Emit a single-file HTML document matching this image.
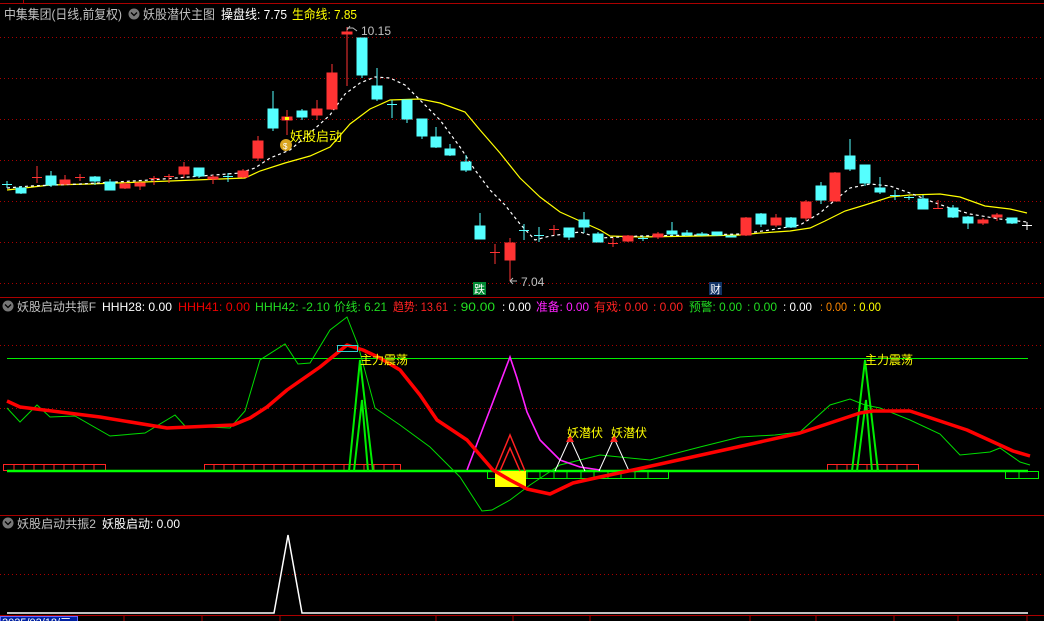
<!DOCTYPE html>
<html><head><meta charset="utf-8"><style>
html,body{margin:0;padding:0;background:#000;}
svg{display:block;font-family:"Liberation Sans","Noto Sans CJK SC",sans-serif;}
</style></head><body>
<svg width="1044" height="621" viewBox="0 0 1044 621" xmlns="http://www.w3.org/2000/svg">
<rect width="1044" height="621" fill="#000"/>
<line x1="0" y1="3.5" x2="1044" y2="3.5" stroke="#a00" stroke-width="1"/>
<line x1="23.5" y1="0" x2="23.5" y2="4" stroke="#a00"/>
<line x1="0" y1="297.5" x2="1044" y2="297.5" stroke="#a00"/>
<line x1="0" y1="515.5" x2="1044" y2="515.5" stroke="#a00"/>
<line x1="0" y1="615.5" x2="1044" y2="615.5" stroke="#a00"/>
<g stroke="#a00" stroke-dasharray="1,3" stroke-width="1">
<line x1="0" y1="37.5" x2="1044" y2="37.5"/><line x1="0" y1="78.5" x2="1044" y2="78.5"/>
<line x1="0" y1="119.5" x2="1044" y2="119.5"/><line x1="0" y1="160.5" x2="1044" y2="160.5"/>
<line x1="0" y1="201.5" x2="1044" y2="201.5"/><line x1="0" y1="242.5" x2="1044" y2="242.5"/>
<line x1="0" y1="283.5" x2="1044" y2="283.5"/>
<line x1="0" y1="345.5" x2="1044" y2="345.5"/><line x1="0" y1="408.5" x2="1044" y2="408.5"/>
<line x1="0" y1="574.5" x2="1044" y2="574.5"/>
</g>
<g font-size="13">
<text x="4" y="19" fill="#c0c0c0" textLength="118" lengthAdjust="spacingAndGlyphs">中集集团(日线,前复权)</text>
<text x="143" y="19" fill="#c0c0c0" textLength="72" lengthAdjust="spacingAndGlyphs">妖股潜伏主图</text>
<text x="221" y="19" fill="#fff" textLength="66" lengthAdjust="spacingAndGlyphs">操盘线: 7.75</text>
<text x="292" y="19" fill="#ff0" textLength="65" lengthAdjust="spacingAndGlyphs">生命线: 7.85</text>
</g>
<circle cx="134" cy="14" r="5.5" fill="#777"/><path d="M131,12.5 L134,15.5 L137,12.5" stroke="#000" stroke-width="1.3" fill="none"/>
<polyline fill="none" stroke="#ff0" stroke-width="1.2" points="7,190 50,185 90,184 170,181 245,178 260,171 285,163 310,156 330,147 350,124 370,109 390,100 420,99 440,103 465,112 480,130 500,153 520,178 540,197 560,212 580,221 600,230 610,236 640,237 700,236 740,235 760,233 790,231 810,228 825,221 845,211 865,205 890,197 910,195 940,194 960,197 985,206 1010,209 1027,213"/>
<polyline fill="none" stroke="#fff" stroke-width="1.2" stroke-dasharray="3,3" points="7,188 30,186 80,184 150,180 240,173 255,168 270,158 290,150 310,133 330,115 345,94 360,83 375,77 390,78 405,85 420,100 440,120 460,147 475,170 490,190 505,205 520,224 535,240 550,236 580,232 600,238 640,236 700,235 740,234 770,230 800,225 820,213 835,200 850,188 870,184 890,186 910,193 930,201 950,208 970,214 1000,219 1027,222"/>
<g stroke="#5ff" fill="#5ff" stroke-width="1">
<line x1="7" y1="181" x2="7" y2="188"/><line x1="2" y1="184.5" x2="12" y2="184.5"/>
<line x1="21" y1="186" x2="21" y2="194"/><rect x="16" y="188" width="10" height="5"/>
<line x1="51" y1="171" x2="51" y2="187"/><rect x="46" y="176" width="10" height="9"/>
<line x1="95" y1="176" x2="95" y2="185"/><rect x="90" y="177" width="10" height="4"/>
<line x1="110" y1="179" x2="110" y2="190"/><rect x="105" y="182" width="10" height="8"/>
<line x1="199" y1="168" x2="199" y2="178"/><rect x="194" y="168" width="10" height="8"/>
<line x1="228" y1="173" x2="228" y2="182"/><line x1="223" y1="176.5" x2="233" y2="176.5"/>
<line x1="273" y1="91" x2="273" y2="131"/><rect x="268" y="109" width="10" height="19"/>
<line x1="302" y1="109" x2="302" y2="120"/><rect x="297" y="111" width="10" height="6"/>
<line x1="362" y1="38" x2="362" y2="78"/><rect x="357" y="38" width="10" height="37"/>
<line x1="377" y1="68" x2="377" y2="101"/><rect x="372" y="86" width="10" height="13"/>
<line x1="392" y1="100" x2="392" y2="118"/><line x1="387" y1="104.5" x2="397" y2="104.5"/>
<line x1="407" y1="100" x2="407" y2="123"/><rect x="402" y="100" width="10" height="19"/>
<line x1="422" y1="119" x2="422" y2="139"/><rect x="417" y="119" width="10" height="17"/>
<line x1="436" y1="127" x2="436" y2="148"/><rect x="431" y="137" width="10" height="10"/>
<line x1="450" y1="144" x2="450" y2="156"/><rect x="445" y="149" width="10" height="6"/>
<line x1="466" y1="155" x2="466" y2="172"/><rect x="461" y="162" width="10" height="8"/>
<line x1="480" y1="213" x2="480" y2="239"/><rect x="475" y="226" width="10" height="13"/>
<line x1="524" y1="224" x2="524" y2="240"/><line x1="519" y1="230.5" x2="529" y2="230.5"/>
<line x1="539" y1="227" x2="539" y2="242"/><line x1="534" y1="235.5" x2="544" y2="235.5"/>
<line x1="569" y1="228" x2="569" y2="240"/><rect x="564" y="228" width="10" height="9"/>
<line x1="584" y1="212" x2="584" y2="233"/><rect x="579" y="220" width="10" height="7"/>
<line x1="598" y1="232" x2="598" y2="242"/><rect x="593" y="234" width="10" height="8"/>
<line x1="643" y1="236" x2="643" y2="241"/><line x1="638" y1="238.5" x2="648" y2="238.5"/>
<line x1="672" y1="222" x2="672" y2="236"/><rect x="667" y="231" width="10" height="3"/>
<line x1="687" y1="230" x2="687" y2="236"/><rect x="682" y="233" width="10" height="2"/>
<line x1="702" y1="232" x2="702" y2="236"/><rect x="697" y="234" width="10" height="1"/>
<line x1="717" y1="232" x2="717" y2="236"/><rect x="712" y="232" width="10" height="3"/>
<rect x="726" y="236" width="10" height="1"/>
<line x1="761" y1="213" x2="761" y2="227"/><rect x="756" y="214" width="10" height="10"/>
<line x1="791" y1="217" x2="791" y2="228"/><rect x="786" y="218" width="10" height="9"/>
<line x1="821" y1="182" x2="821" y2="204"/><rect x="816" y="186" width="10" height="14"/>
<line x1="850" y1="139" x2="850" y2="171"/><rect x="845" y="156" width="10" height="13"/>
<line x1="865" y1="165" x2="865" y2="186"/><rect x="860" y="165" width="10" height="18"/>
<line x1="880" y1="177" x2="880" y2="194"/><rect x="875" y="188" width="10" height="4"/>
<line x1="895" y1="190" x2="895" y2="200"/><line x1="890" y1="195.5" x2="900" y2="195.5"/>
<line x1="909" y1="196" x2="909" y2="200"/><line x1="904" y1="197.5" x2="914" y2="197.5"/>
<line x1="923" y1="195" x2="923" y2="209"/><rect x="918" y="199" width="10" height="10"/>
<line x1="953" y1="205" x2="953" y2="218"/><rect x="948" y="208" width="10" height="9"/>
<line x1="968" y1="216" x2="968" y2="229"/><rect x="963" y="217" width="10" height="6"/>
<line x1="1012" y1="218" x2="1012" y2="224"/><rect x="1007" y="218" width="10" height="5"/>
</g>
<g stroke="#f33" fill="#f33" stroke-width="1">
<line x1="37" y1="166" x2="37" y2="183"/><line x1="32" y1="177.5" x2="42" y2="177.5"/>
<line x1="65" y1="175" x2="65" y2="185"/><rect x="60" y="180" width="10" height="4"/>
<line x1="80" y1="174" x2="80" y2="181"/><line x1="75" y1="177.5" x2="85" y2="177.5"/>
<line x1="125" y1="182" x2="125" y2="189"/><rect x="120" y="184" width="10" height="4"/>
<line x1="140" y1="182" x2="140" y2="190"/><rect x="135" y="183" width="10" height="3"/>
<line x1="154" y1="176" x2="154" y2="185"/><line x1="149" y1="178.5" x2="159" y2="178.5"/>
<line x1="169" y1="174" x2="169" y2="183"/><line x1="164" y1="176.5" x2="174" y2="176.5"/>
<line x1="184" y1="162" x2="184" y2="178"/><rect x="179" y="167" width="10" height="7"/>
<line x1="213" y1="175" x2="213" y2="184"/><rect x="208" y="177" width="10" height="2"/>
<line x1="243" y1="169" x2="243" y2="178"/><rect x="238" y="171" width="10" height="6"/>
<line x1="258" y1="136" x2="258" y2="161"/><rect x="253" y="141" width="10" height="17"/>
<line x1="287" y1="110" x2="287" y2="135"/><rect x="282" y="117" width="10" height="3"/>
<line x1="317" y1="100" x2="317" y2="120"/><rect x="312" y="109" width="10" height="6"/>
<line x1="332" y1="64" x2="332" y2="110"/><rect x="327" y="73" width="10" height="36"/>
<line x1="347" y1="27" x2="347" y2="86"/><rect x="342" y="32" width="10" height="2"/>
<line x1="495" y1="244" x2="495" y2="264"/><line x1="490" y1="252.5" x2="500" y2="252.5"/>
<line x1="510" y1="238" x2="510" y2="281"/><rect x="505" y="243" width="10" height="17"/>
<line x1="554" y1="225" x2="554" y2="235"/><line x1="549" y1="229.5" x2="559" y2="229.5"/>
<line x1="613" y1="238" x2="613" y2="247"/><line x1="608" y1="243.5" x2="618" y2="243.5"/>
<line x1="628" y1="235" x2="628" y2="242"/><rect x="623" y="236" width="10" height="5"/>
<line x1="658" y1="232" x2="658" y2="239"/><rect x="653" y="234" width="10" height="3"/>
<line x1="746" y1="217" x2="746" y2="236"/><rect x="741" y="218" width="10" height="17"/>
<line x1="776" y1="214" x2="776" y2="227"/><rect x="771" y="218" width="10" height="7"/>
<line x1="806" y1="200" x2="806" y2="221"/><rect x="801" y="202" width="10" height="16"/>
<line x1="835" y1="172" x2="835" y2="201"/><rect x="830" y="173" width="10" height="28"/>
<line x1="938" y1="200" x2="938" y2="209"/><line x1="933" y1="208.5" x2="943" y2="208.5"/>
<line x1="983" y1="218" x2="983" y2="225"/><rect x="978" y="220" width="10" height="3"/>
<line x1="997" y1="213" x2="997" y2="221"/><rect x="992" y="215" width="10" height="2"/>
</g>
<rect x="285" y="117" width="4" height="3" fill="#ff0"/>
<g stroke="#fff"><line x1="1027" y1="222" x2="1027" y2="230"/><line x1="1022" y1="225.5" x2="1032" y2="225.5"/></g>
<path d="M347,30 L350,26 M347,28 L353,28 L357,31" stroke="#bbb" fill="none"/>
<text x="361" y="35" font-size="12" fill="#c0c0c0">10.15</text>
<path d="M510,281 L517,281 M510,281 L513,278 M510,281 L513,284" stroke="#bbb" fill="none"/>
<text x="521" y="286" font-size="12" fill="#c0c0c0">7.04</text>
<circle cx="286" cy="145" r="6" fill="#d9a520"/><text x="283" y="149" font-size="8" fill="#fff">$</text>
<text x="290" y="141" font-size="13" fill="#ff0">妖股启动</text>
<rect x="473" y="282" width="13" height="13" fill="#083"/><text x="474" y="293" font-size="11" fill="#fff">跌</text>
<rect x="709" y="282" width="13" height="13" fill="#136"/><text x="710" y="293" font-size="11" fill="#fff">财</text>
<circle cx="8" cy="306" r="5.5" fill="#777"/><path d="M5,304.5 L8,307.5 L11,304.5" stroke="#000" stroke-width="1.3" fill="none"/>
<g font-size="12">
<text x="17" y="311" fill="#c0c0c0" textLength="79" lengthAdjust="spacingAndGlyphs">妖股启动共振F</text>
<text x="102" y="311" fill="#fff" textLength="70" lengthAdjust="spacingAndGlyphs">HHH28: 0.00</text>
<text x="178" y="311" fill="#e00" textLength="72" lengthAdjust="spacingAndGlyphs">HHH41: 0.00</text>
<text x="255" y="311" fill="#2d2" textLength="75" lengthAdjust="spacingAndGlyphs">HHH42: -2.10</text>
<text x="334" y="311" fill="#2d2" textLength="53" lengthAdjust="spacingAndGlyphs">价线: 6.21</text>
<text x="393" y="311" fill="#f22" textLength="55" lengthAdjust="spacingAndGlyphs">趋势: 13.61</text>
<text x="453" y="311" fill="#2d2" textLength="42" lengthAdjust="spacingAndGlyphs">: 90.00</text>
<text x="502" y="311" fill="#fff" textLength="29" lengthAdjust="spacingAndGlyphs">: 0.00</text>
<text x="536" y="311" fill="#f2f" textLength="53" lengthAdjust="spacingAndGlyphs">准备: 0.00</text>
<text x="594" y="311" fill="#f22" textLength="54" lengthAdjust="spacingAndGlyphs">有戏: 0.00</text>
<text x="653" y="311" fill="#f22" textLength="30" lengthAdjust="spacingAndGlyphs">: 0.00</text>
<text x="689" y="311" fill="#2d2" textLength="53" lengthAdjust="spacingAndGlyphs">预警: 0.00</text>
<text x="747" y="311" fill="#2d2" textLength="30" lengthAdjust="spacingAndGlyphs">: 0.00</text>
<text x="783" y="311" fill="#fff" textLength="29" lengthAdjust="spacingAndGlyphs">: 0.00</text>
<text x="820" y="311" fill="#f80" textLength="27" lengthAdjust="spacingAndGlyphs">: 0.00</text>
<text x="853" y="311" fill="#ff0" textLength="28" lengthAdjust="spacingAndGlyphs">: 0.00</text>
</g>
<line x1="7" y1="358.5" x2="1028" y2="358.5" stroke="#0e0" stroke-width="1"/>
<g stroke="#f22" fill="none">
<rect x="3.5" y="464.5" width="102" height="6"/><rect x="204.5" y="464.5" width="196" height="6"/><rect x="827.5" y="464.5" width="91" height="6"/>
<path d="M14,465v6M24,465v6M34,465v6M44,465v6M54,465v6M64,465v6M74,465v6M84,465v6M94,465v6M214,465v6M224,465v6M234,465v6M244,465v6M254,465v6M264,465v6M274,465v6M284,465v6M294,465v6M304,465v6M314,465v6M324,465v6M334,465v6M344,465v6M354,465v6M364,465v6M374,465v6M384,465v6M394,465v6M837,465v6M847,465v6M857,465v6M867,465v6M877,465v6M887,465v6M897,465v6M907,465v6"/>
</g>
<g stroke="#0e0" fill="none">
<rect x="487.5" y="471.5" width="181" height="7"/><rect x="1005.5" y="471.5" width="33" height="7"/>
<path d="M500,472v6M513,472v6M527,472v6M540,472v6M554,472v6M567,472v6M581,472v6M594,472v6M608,472v6M621,472v6M635,472v6M648,472v6M1019,472v6"/>
</g>
<line x1="7" y1="471" x2="1028" y2="471" stroke="#0f0" stroke-width="2.5"/>
<rect x="495" y="471" width="31" height="16" fill="#ff0"/>
<polyline fill="none" stroke="#0d0" stroke-width="1" points="7,408 20,422 37,405 50,417 75,416 110,436 145,433 175,415 185,426 230,428 245,411 260,360 285,344 298,364 310,363 330,330 347,317 358,345 375,408 400,425 430,447 460,477 482,511 492,510 510,500 530,485 560,465 600,455 650,460 700,447 740,437 775,435 800,432 830,405 850,399 865,405 880,408 910,420 940,434 960,455 990,452 1000,448 1020,462 1030,465"/>
<polyline fill="none" stroke="#f2f" stroke-width="1.6" points="467,470 510,357 517,378 527,412 540,440 560,460 580,467 600,470"/>
<g stroke="#0e0" stroke-width="2" fill="none">
<polyline points="349,471 360,360 373,471"/><polyline points="354,471 362,400 368,471"/>
<polyline points="852,471 865,360 878,471"/><polyline points="857,471 866,400 872,471"/>
</g>
<g stroke="#f22" stroke-width="1.5" fill="none">
<polyline points="495,471 510,435 525,471"/><polyline points="500,471 510,448 520,471"/>
</g>
<g stroke="#fff" stroke-width="1" fill="none">
<polyline points="555,471 570,438 585,471"/><polyline points="599,471 614,438 629,471"/>
</g>
<path d="M566,442 L570,435 L574,442Z M610,442 L614,435 L618,442Z" fill="#f22"/>
<polyline fill="none" stroke="#f00" stroke-width="3.5" stroke-linejoin="round" points="7,401 20,407 100,417 167,428 233,425 250,418 267,407 287,390 320,367 347,345 363,350 380,358 400,370 420,395 437,420 467,440 493,470 510,480 527,489 550,494 573,483 600,477 633,470 733,448 800,433 860,413 873,411 910,411 967,430 1013,451 1030,456"/>
<rect x="337.5" y="345.5" width="20" height="6" stroke="#3cc" fill="none"/>
<g font-size="12" fill="#ff0">
<text x="360" y="364">主力震荡</text><text x="865" y="364">主力震荡</text>
<text x="567" y="437">妖潜伏</text><text x="611" y="437">妖潜伏</text>
</g>
<circle cx="8" cy="523" r="5.5" fill="#777"/><path d="M5,521.5 L8,524.5 L11,521.5" stroke="#000" stroke-width="1.3" fill="none"/>
<text x="17" y="528" font-size="12" fill="#c0c0c0" textLength="79" lengthAdjust="spacingAndGlyphs">妖股启动共振2</text>
<text x="102" y="528" font-size="12" fill="#fff" textLength="78" lengthAdjust="spacingAndGlyphs">妖股启动: 0.00</text>
<polyline fill="none" stroke="#fff" stroke-width="1.5" points="7,613 274,613 288,535 302,613 1028,613"/>
<rect x="0" y="616" width="78" height="5" fill="#0020a0"/>
<rect x="0.5" y="616.5" width="77" height="5" fill="none" stroke="#66f"/>
<text x="2" y="626" font-size="11" fill="#fff">2025/02/18/三</text>
<g stroke="#a00"><path d="M124,616v5M202,616v5M280,616v5M436,616v5M513,616v5M590,616v5M750,616v5M816,616v5M894,616v5M958,616v5M1027,616v5"/></g>
</svg>
</body></html>
